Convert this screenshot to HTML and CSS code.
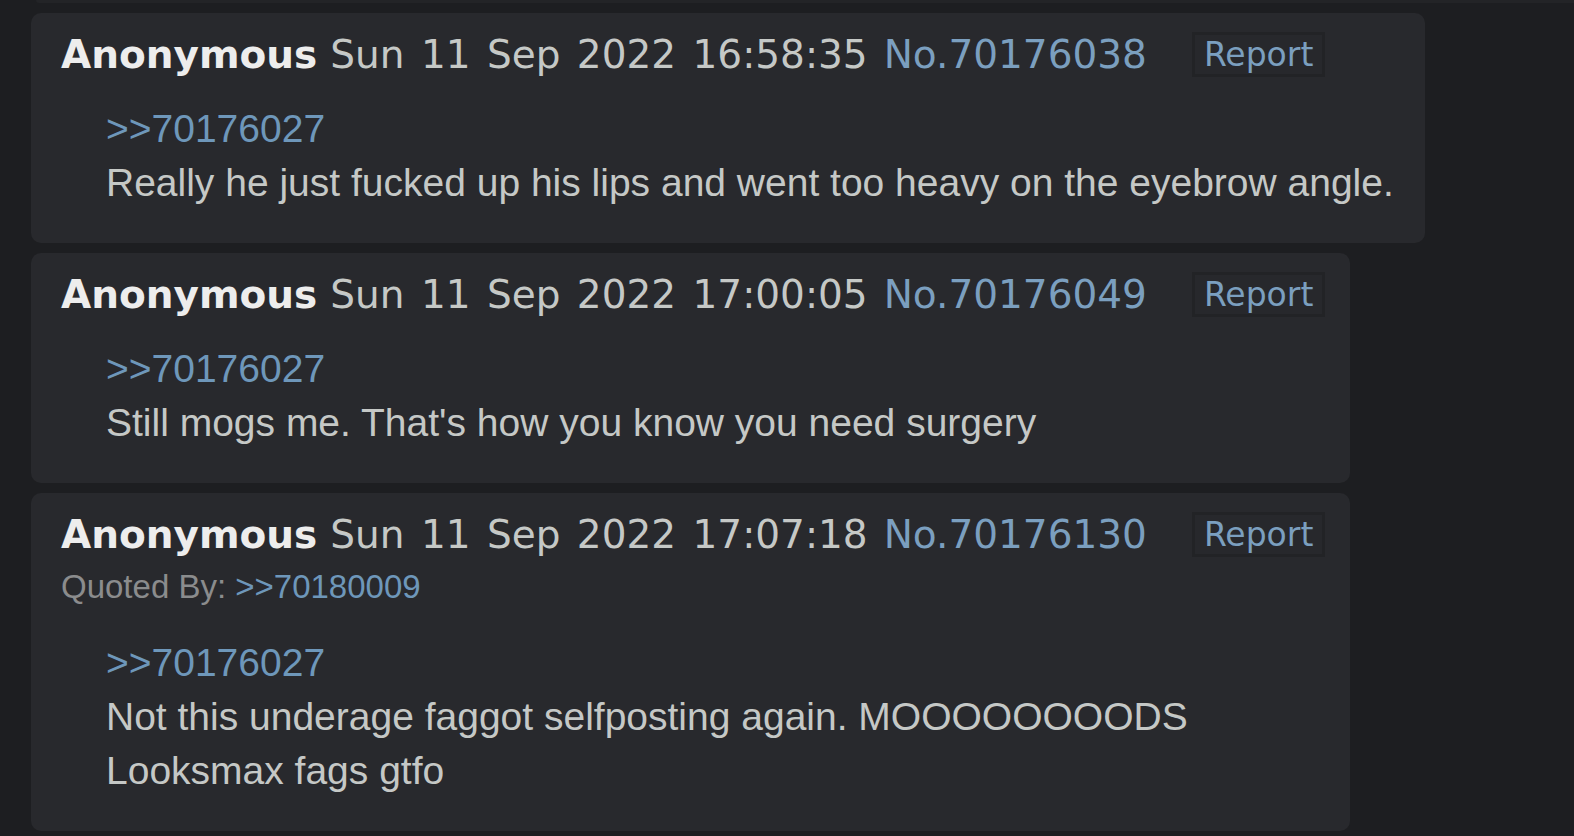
FILE: index.html
```html
<!DOCTYPE html>
<html lang="en">
<head>
    <meta charset="UTF-8">
    <meta name="viewport" content="width=device-width, initial-scale=1.0">
    <title>/fit/ - Thread 70176027</title>

    <link rel="stylesheet" href="styles.css">
</head>

<body>
    <div id="thread">
        <!-- bottom edge of the post above, scrolled off -->
        <div class="post-tail"></div>

        <div class="post" id="p70176038">
            <div class="post-info">
                <span class="name">Anonymous</span>
                <span class="date">Sun 11 Sep 2022 16:58:35</span>
                <a class="post-no" href="#p70176038">No.70176038</a>
                <button class="report">Report</button>
            </div>
            <blockquote class="post-body">
                <a class="quotelink" href="#p70176027">&gt;&gt;70176027</a><br>
                Really he just fucked up his lips and went too heavy on the eyebrow angle.
            </blockquote>
        </div>

        <div class="post" id="p70176049">
            <div class="post-info">
                <span class="name">Anonymous</span>
                <span class="date">Sun 11 Sep 2022 17:00:05</span>
                <a class="post-no" href="#p70176049">No.70176049</a>
                <button class="report">Report</button>
            </div>
            <blockquote class="post-body">
                <a class="quotelink" href="#p70176027">&gt;&gt;70176027</a><br>
                Still mogs me. That's how you know you need surgery
            </blockquote>
        </div>

        <div class="post" id="p70176130">
            <div class="post-info">
                <span class="name">Anonymous</span>
                <span class="date">Sun 11 Sep 2022 17:07:18</span>
                <a class="post-no" href="#p70176130">No.70176130</a>
                <button class="report">Report</button>
            </div>
            <div class="backlinks">Quoted By: <a class="quotelink" href="#p70180009">&gt;&gt;70180009</a></div>
            <blockquote class="post-body">
                <a class="quotelink" href="#p70176027">&gt;&gt;70176027</a><br>
                Not this underage faggot selfposting again. MOOOOOOOODS<br>
                Looksmax fags gtfo
            </blockquote>
        </div>
    </div>
</body>

</html>
```

FILE: styles.css
```css
body {
    margin: 0;
    background-color: #1d1e21;
    color: #c5c8c6;
    font-family: "Liberation Sans", Arial, sans-serif;
    overflow: hidden;
}

a {
    color: #81a2be;
    text-decoration: none;
}

#thread {
    display: flex;
    flex-direction: column;
    align-items: flex-start;
    gap: 10px;
    padding-left: 31px;
}

.post-tail {
    align-self: stretch;
    height: 3px;
    margin-left: 5px;
    background-color: #232427;
    border-bottom-left-radius: 3px;
}

.post {
    background-color: #28292d;
    border-radius: 10px;
    padding: 19px 25px 33px 30px;
}

/* name, date, number and the report button on one line */
.post-info {
    display: flex;
    align-items: center;
    white-space: nowrap;
    font-family: "DejaVu Sans", Verdana, sans-serif;
    font-size: 39px;
    line-height: 45px;
}

.name {
    color: #ededed;
    font-weight: bold;
    margin-right: 13px;
}

.date {
    margin-right: 16px;
    word-spacing: 4px;
}

.post-no {
    color: #7b9fbf;
}

.report {
    margin-left: 45px;
    height: 45px;
    padding: 0 9px;
    font-family: "DejaVu Sans", Verdana, sans-serif;
    font-size: 33px;
    line-height: 39px;
    color: #7b9fbf;
    background-color: #27282c;
    border: 3px solid #222326;
    border-radius: 0;
}

.backlinks {
    padding-top: 9px;
    font-size: 33px;
    line-height: 42px;
    color: #8b8c8d;
}

.backlinks a {
    color: #6e97ba;
}

.post-body {
    margin: 25px 6px 0 45px;
    font-size: 39px;
    line-height: 54px;
}

.backlinks + .post-body {
    margin-top: 28px;
}

.quotelink {
    color: #6e97ba;
}
```
